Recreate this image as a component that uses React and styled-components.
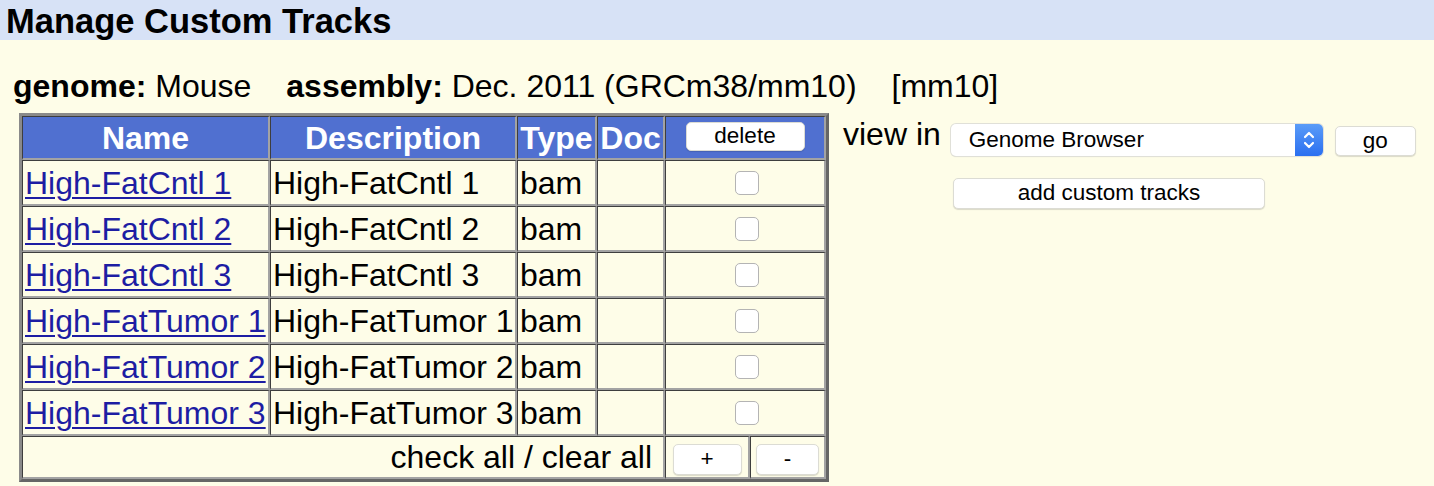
import React from "react";
import styled, { createGlobalStyle } from "styled-components";

const Global = createGlobalStyle`
  html, body { margin: 0; padding: 0; background: #fefde8; }
  body { font-family: "Liberation Sans", Arial, sans-serif; color: #000; }
  * { box-sizing: border-box; }
`;

const TitleBar = styled.div`
  height: 40px;
  background: #d7e2f6;
  padding: 2px 0 0 6px;
  font-size: 34.5px;
  font-weight: bold;
  line-height: 38px;
`;

const InfoLine = styled.div`
  margin: 28px 0 0 13px;
  font-size: 32px;
  line-height: 37px;
  white-space: pre;
  display: flex;
  gap: 35px;
`;

const Label = styled.b`
  font-weight: bold;
`;

const Main = styled.div`
  display: flex;
  align-items: flex-start;
  margin: 8px 0 0 19px;
`;

const Table = styled.table`
  border-collapse: separate;
  border-spacing: 0;
  table-layout: fixed;
  width: 810px;
  border-style: solid;
  border-width: 3px;
  border-color: #8a8a8a #666 #666 #8a8a8a;
  font-size: 32px;
`;

const Cell = styled.td`
  border-style: solid;
  border-color: #3e3e3e #a3a3a3 #a3a3a3 #3e3e3e;
  border-width: 1px 2px 2px 1px;
  padding: 0 2px;
  height: ${(p) => p.$h || 46}px;
  line-height: 36px;
  white-space: nowrap;
  overflow: hidden;
  vertical-align: middle;
  text-align: ${(p) => p.$align || "left"};
  ${(p) => (p.$pr ? `padding-right: ${p.$pr}px;` : "")}
`;

const HeadCell = styled(Cell)`
  background: #5070d0;
  color: #fff;
  font-weight: bold;
  text-align: center;
  padding: 0;
`;

const TrackLink = styled.a`
  color: #1d1da3;
  text-decoration: underline;
  text-decoration-thickness: 2px;
  text-underline-offset: 3px;
`;

const Button = styled.button`
  font-family: "Liberation Sans", Arial, sans-serif;
  font-size: 22.5px;
  color: #000;
  background: #fff;
  border: 1px solid #dcdcd4;
  border-radius: 5px;
  box-shadow: 0 1px 1px rgba(0, 0, 0, 0.14);
  width: ${(p) => p.$w}px;
  height: ${(p) => p.$h || 30}px;
  padding: 0;
  line-height: 1;
  margin: ${(p) => p.$m || "0"};
  vertical-align: middle;
  display: ${(p) => (p.$block ? "block" : "inline-block")};
`;

const Check = styled.span`
  display: inline-block;
  width: 24px;
  height: 24px;
  border: 1px solid #b4b4b4;
  border-radius: 5px;
  background: #fff;
  vertical-align: middle;
  margin: -4px 0 0 3px;
`;

const Side = styled.div`
  margin: 3px 0 0 14px;
  display: flex;
  flex-direction: column;
`;

const ViewRow = styled.div`
  display: flex;
  align-items: flex-start;
`;

const ViewLabel = styled.span`
  font-size: 32px;
  line-height: 37px;
`;

const SelectBox = styled.div`
  margin: 8px 0 0 10px;
  width: 372px;
  height: 32px;
  background: #fff;
  border-radius: 5px;
  box-shadow: 0 0 0 1px #e0e0d8, 0 1px 1px rgba(0, 0, 0, 0.15);
  display: flex;
  align-items: center;
  font-size: 22.5px;
  overflow: hidden;
`;

const SelectText = styled.span`
  flex: 1;
  padding-left: 18px;
`;

const SelectArrow = styled.span`
  width: 28px;
  height: 100%;
  background: linear-gradient(#5a9cf8, #2a6ff0);
  display: flex;
  align-items: center;
  justify-content: center;
`;

const AddRow = styled.div`
  margin: 22px 0 0 110px;
`;

const tracks = [
  "High-FatCntl 1",
  "High-FatCntl 2",
  "High-FatCntl 3",
  "High-FatTumor 1",
  "High-FatTumor 2",
  "High-FatTumor 3",
];

export default function App() {
  return (
    <>
      <Global />
      <TitleBar>Manage Custom Tracks</TitleBar>
      <InfoLine>
        <span>
          <Label>genome:</Label> Mouse
        </span>
        <span>
          <Label>assembly:</Label> Dec. 2011 (GRCm38/mm10)
        </span>
        <span>[mm10]</span>
      </InfoLine>
      <Main>
        <Table>
          <colgroup>
            <col style={{ width: 248 }} />
            <col style={{ width: 247 }} />
            <col style={{ width: 80 }} />
            <col style={{ width: 68 }} />
            <col style={{ width: 85 }} />
            <col style={{ width: 76 }} />
          </colgroup>
          <thead>
            <tr>
              <HeadCell as="th" $h={44}>Name</HeadCell>
              <HeadCell as="th" $h={44}>Description</HeadCell>
              <HeadCell as="th" $h={44}>Type</HeadCell>
              <HeadCell as="th" $h={44}>Doc</HeadCell>
              <HeadCell as="th" colSpan={2} $h={44}>
                <Button $w={119} $h={29} $m="-3px auto 0" $block>
                  delete
                </Button>
              </HeadCell>
            </tr>
          </thead>
          <tbody>
            {tracks.map((t) => (
              <tr key={t}>
                <Cell>
                  <TrackLink href="#">{t}</TrackLink>
                </Cell>
                <Cell>{t}</Cell>
                <Cell>bam</Cell>
                <Cell></Cell>
                <Cell colSpan={2} $align="center">
                  <Check />
                </Cell>
              </tr>
            ))}
            <tr>
              <Cell colSpan={4} $align="right" $pr={11} $h={43}>
                check all / clear all
              </Cell>
              <Cell $align="center" $h={43}>
                <Button $w={69} $h={31}>+</Button>
              </Cell>
              <Cell $align="center" $h={43}>
                <Button $w={63} $h={31}>-</Button>
              </Cell>
            </tr>
          </tbody>
        </Table>
        <Side>
          <ViewRow>
            <ViewLabel>view in</ViewLabel>
            <SelectBox>
              <SelectText>Genome Browser</SelectText>
              <SelectArrow>
                <svg width="14" height="24" viewBox="0 0 14 24" fill="none" stroke="#fff" strokeWidth="2.2" strokeLinecap="round" strokeLinejoin="round">
                  <path d="M3 9 L7 5 L11 9" />
                  <path d="M3 15 L7 19 L11 15" />
                </svg>
              </SelectArrow>
            </SelectBox>
            <Button $w={81} $h={30} $m="10px 0 0 12px">go</Button>
          </ViewRow>
          <AddRow>
            <Button $w={312} $h={31}>add custom tracks</Button>
          </AddRow>
        </Side>
      </Main>
    </>
  );
}
